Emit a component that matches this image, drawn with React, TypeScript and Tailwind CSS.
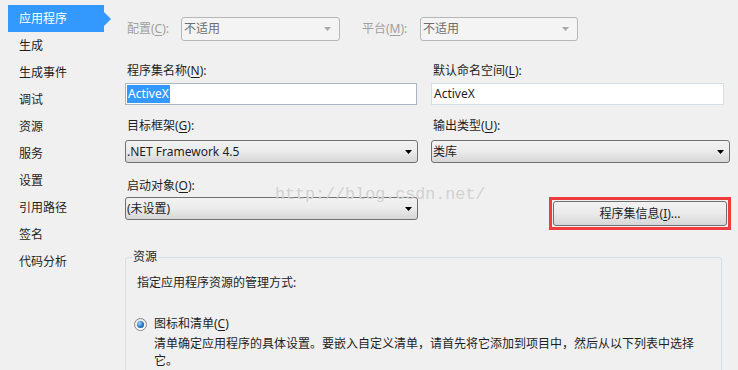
import type { ReactNode } from 'react'

/* ── Pieces ─────────────────────────────────── */

const navItems = ['应用程序', '生成', '生成事件', '调试', '资源', '服务', '设置', '引用路径', '签名', '代码分析']

function Key({ k }: { k: string }) {
  return <span className="underline underline-offset-2">{k}</span>
}

function Label({ children }: { children: ReactNode }) {
  return <div className="h-[16px] pl-[2px] leading-[16px] text-[#1e1e1e]">{children}</div>
}

function Arrow({ color }: { color: string }) {
  return (
    <svg width="7" height="4" viewBox="0 0 7 4" className="shrink-0">
      <path d="M0 0h7L3.5 4z" fill={color} />
    </svg>
  )
}

function DisabledCombo({ width }: { width: string }) {
  return (
    <div className={`${width} h-[24px] flex items-center justify-between pl-[2px] pr-[8px] rounded-[3px] border border-[#b4b8bb] bg-[#f4f4f4] text-[#6d6d6d]`}>
      <span>不适用</span>
      <Arrow color="#a9a9a9" />
    </div>
  )
}

function Combo({ value, width }: { value: string; width: string }) {
  return (
    <div className={`${width} h-[23px] flex items-center justify-between pl-[1px] pr-[5px] rounded-[3px] border border-[#707070] bg-gradient-to-b from-[#f2f2f2] via-[#ebebeb] to-[#d6d6d6] text-[#1e1e1e]`}>
      <span>{value}</span>
      <Arrow color="#000" />
    </div>
  )
}

function TextBox({ children, width, border }: { children: ReactNode; width: string; border: string }) {
  return (
    <div className={`${width} h-[22px] flex items-center pl-[1px] border ${border} bg-white text-[#1e1e1e]`}>
      {children}
    </div>
  )
}

/* ── App ─────────────────────────────────────── */

export default function App() {
  return (
    <div
      className="relative w-[738px] h-[370px] overflow-hidden flex bg-[#f0f0f0] text-[12px] text-[#1e1e1e]"
      style={{ fontFamily: '"Noto Sans", "Noto Sans CJK SC", sans-serif' }}
    >
      {/* sidebar */}
      <div className="w-[125px] shrink-0 pt-[5px] pl-[8px]">
        {navItems.map((item, i) =>
          i === 0 ? (
            <div key={item} className="flex items-center">
              <div className="w-[96px] h-[27px] flex items-center pl-[11px] bg-[#3399ff] text-white">{item}</div>
              <svg width="7" height="14" viewBox="0 0 7 14">
                <path d="M0 0L7 7L0 14z" fill="#3399ff" />
              </svg>
            </div>
          ) : (
            <div key={item} className="h-[27px] flex items-center pl-[11px]">{item}</div>
          )
        )}
      </div>

      {/* main */}
      <div className="flex-1 flex flex-col">
        <div className="mt-[17px] flex items-center">
          <span className="w-[56px] pl-[2px] text-[#a0a0a0]">配置(<Key k="C" />):</span>
          <DisabledCombo width="w-[159px]" />
          <span className="ml-[22px] w-[58px] text-[#a0a0a0]">平台(<Key k="M" />):</span>
          <DisabledCombo width="w-[158px]" />
        </div>

        <div className="mt-[15px] h-px bg-[#b9b9b9]" />

        <div className="mt-[7px] flex gap-[14px]">
          <div className="w-[292px] flex flex-col gap-[4px]">
            <Label>程序集名称(<Key k="N" />):</Label>
            <TextBox width="w-[292px]" border="border-[#aab6c4]">
              <span className="bg-[#3399ff] text-white px-[1px] leading-[18px]">ActiveX</span>
            </TextBox>
          </div>
          <div className="w-[293px] flex flex-col gap-[4px]">
            <Label>默认命名空间(<Key k="L" />):</Label>
            <TextBox width="w-[293px]" border="border-[#d6dde4]">
              <span className="px-[1px]">ActiveX</span>
            </TextBox>
          </div>
        </div>

        <div className="mt-[13px] flex gap-[14px]">
          <div className="w-[292px] flex flex-col gap-[6px]">
            <Label>目标框架(<Key k="G" />):</Label>
            <Combo width="w-[293px]" value=".NET Framework 4.5" />
          </div>
          <div className="w-[299px] flex flex-col gap-[6px]">
            <Label>输出类型(<Key k="U" />):</Label>
            <Combo width="w-[299px]" value="类库" />
          </div>
        </div>

        <div className="mt-[15px] h-[42px] flex items-start gap-[14px]">
          <div className="w-[292px] flex flex-col gap-[3px]">
            <Label>启动对象(<Key k="O" />):</Label>
            <Combo width="w-[293px]" value="(未设置)" />
          </div>
          <div className="w-[305px] pt-[19px] pl-[118px]">
            {/* red annotation box */}
            <div className="w-[182px] border-[3px] border-[#f03c3c] p-px pr-[2px]">
              <button className="w-[174px] h-[25px] rounded-[3px] border border-[#707070] bg-gradient-to-b from-[#f2f2f2] via-[#ebebeb] to-[#d6d6d6] text-[#1e1e1e]">
                程序集信息(<Key k="I" />)...
              </button>
            </div>
          </div>
        </div>

        <fieldset className="mt-[29px] w-[597px] rounded-[3px] border border-[#d5dfe5]">
          <legend className="ml-[6px] px-[1px] leading-[16px]">资源</legend>
          <div className="mt-[10px] pl-[11px] leading-[16px]">指定应用程序资源的管理方式:</div>
          <div className="mt-[25px] flex items-center pl-[8px] leading-[16px]">
            <span className="w-[13px] h-[13px] rounded-full border border-[#8a8a8a] bg-gradient-to-b from-[#e6e6e6] to-[#fbfbfb] flex items-center justify-center">
              <span className="w-[7px] h-[7px] rounded-full bg-[radial-gradient(circle_at_35%_35%,#9fd3ff,#1f6fc0_60%,#0d4a8e)]" />
            </span>
            <span className="ml-[7px]">图标和清单(<Key k="C" />)</span>
          </div>
          <div className="mt-[3px] pl-[28px] w-[580px] leading-[17px]">
            清单确定应用程序的具体设置。要嵌入自定义清单，请首先将它添加到项目中，然后从以下列表中选择它。
          </div>
          <div className="h-[40px]" />
        </fieldset>
      </div>

      {/* watermark */}
      <div
        className="absolute left-[275px] top-[185px] text-[16.7px] leading-[20px] text-[#d2d2d2] pointer-events-none"
        style={{ fontFamily: '"Liberation Mono", monospace' }}
      >
        http://blog.csdn.net/
      </div>
    </div>
  )
}
